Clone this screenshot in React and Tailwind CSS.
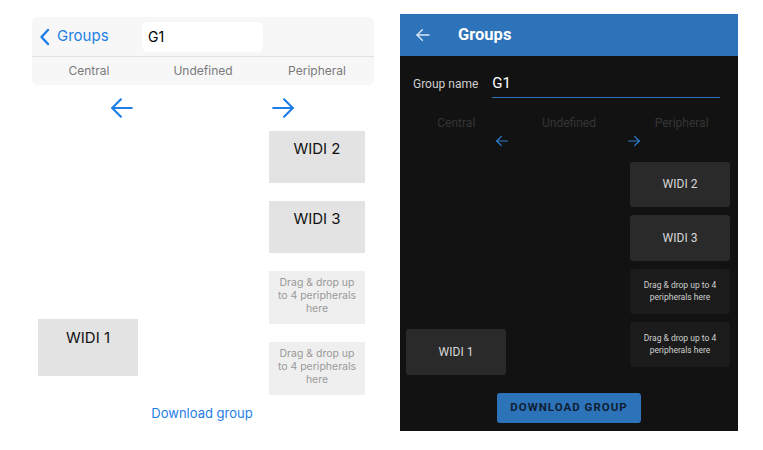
import React from "react";

const Arrow = ({ dir = "left", size = 26, stroke = 2, color = "#1e7ee6" }) => (
  <svg width={size} height={size} viewBox="0 0 24 24" fill="none" stroke={color} strokeWidth={stroke} strokeLinecap="round" strokeLinejoin="round">
    {dir === "left" ? (
      <>
        <path d="M21 12H3" />
        <path d="M11 4l-8 8 8 8" />
      </>
    ) : (
      <>
        <path d="M3 12h18" />
        <path d="M13 4l8 8-8 8" />
      </>
    )}
  </svg>
);

const IosPanel = () => {
  return (
    <div className="w-[342px] ml-[32px] mt-[17px] flex flex-col" style={{ fontFamily: "Inter, 'Noto Sans', sans-serif" }}>
      {/* Nav bar */}
      <div className="bg-[#f7f7f7] rounded-md">
        <div className="h-[40px] flex items-center border-b border-[#e2e2e2]">
          <div className="flex items-center w-[110px] pl-[7px] text-[#1e7ee6]">
            <svg width="12" height="18" viewBox="0 0 12 18" fill="none" stroke="#1e7ee6" strokeWidth="2.4" strokeLinecap="round" strokeLinejoin="round">
              <path d="M9 2L2.5 9L9 16" />
            </svg>
            <span className="ml-[6px] text-[15px]">Groups</span>
          </div>
          <div className="w-[121px] h-[30px] bg-white rounded-md flex items-center px-[6px] text-[14px] text-black">G1</div>
        </div>
        <div className="h-[28px] grid grid-cols-3 items-center text-[12px] text-[#7a7a7a] text-center">
          <span>Central</span>
          <span>Undefined</span>
          <span>Peripheral</span>
        </div>
      </div>

      {/* Move arrows */}
      <div className="h-[46px] flex items-center">
        <div className="ml-[77px]">
          <Arrow dir="left" />
        </div>
        <div className="ml-[135px]">
          <Arrow dir="right" />
        </div>
      </div>

      {/* Columns */}
      <div className="flex">
        <div className="w-[114px] pl-[6px] pt-[188px]">
          <div className="w-[100px] h-[57px] bg-[#e3e3e3] flex justify-center pt-[8px] text-[15px] text-[#111]">WIDI 1</div>
        </div>
        <div className="w-[114px]" />
        <div className="w-[114px] pl-[9px] flex flex-col gap-[18px]">
          <div className="w-[96px] h-[52px] bg-[#e3e3e3] flex justify-center pt-[7px] text-[15px] text-[#111]">WIDI 2</div>
          <div className="w-[96px] h-[52px] bg-[#e3e3e3] flex justify-center pt-[7px] text-[15px] text-[#111]">WIDI 3</div>
          <div className="w-[96px] h-[53px] bg-[#efefef] flex justify-center pt-[5px] text-center text-[10.5px] leading-[13px] text-[#9a9a9a]">
            Drag &amp; drop up
            <br />
            to 4 peripherals
            <br />
            here
          </div>
          <div className="w-[96px] h-[53px] bg-[#efefef] flex justify-center pt-[5px] text-center text-[10.5px] leading-[13px] text-[#9a9a9a]">
            Drag &amp; drop up
            <br />
            to 4 peripherals
            <br />
            here
          </div>
        </div>
      </div>

      <div className="mt-[9px] text-center text-[13px] text-[#1e7ee6] pr-[2px]">Download group</div>
    </div>
  );
};

const AndroidPanel = () => {
  return (
    <div className="w-[338px] h-[417px] ml-[26px] mt-[14px] bg-[#121212] flex flex-col" style={{ fontFamily: "Roboto, 'Noto Sans', sans-serif" }}>
      {/* App bar */}
      <div className="h-[42px] bg-[#2d73b9] flex items-center pl-[15px]">
        <Arrow dir="left" size={16} stroke={2} color="#dce8f5" />
        <span className="ml-[27px] text-[16.5px] font-bold text-white">Groups</span>
      </div>

      {/* Group name */}
      <div className="mt-[16px] flex items-end pl-[13px] pr-[18px]">
        <span className="text-[12px] text-[#cfcfcf] pb-[5px]">Group name</span>
        <div className="ml-[14px] flex-1 border-b border-[#2d73b9] pb-[2px] text-[15px] text-white">G1</div>
      </div>

      {/* Labels */}
      <div className="mt-[16px] grid grid-cols-3 text-center text-[12px] text-[#353535]">
        <span>Central</span>
        <span>Undefined</span>
        <span>Peripheral</span>
      </div>
      <div className="flex h-[18px] items-center">
        <div className="ml-[95px]">
          <Arrow dir="left" size={14} stroke={2} color="#2f7fd3" />
        </div>
        <div className="ml-[118px]">
          <Arrow dir="right" size={14} stroke={2} color="#2f7fd3" />
        </div>
      </div>

      {/* Columns */}
      <div className="mt-[12px] flex">
        <div className="w-[112px] pl-[6px] pt-[167px]">
          <div className="w-[100px] h-[46px] rounded-[3px] bg-[#2a2a2a] flex items-center justify-center text-[12px] text-[#d8d8d8]">WIDI 1</div>
        </div>
        <div className="w-[118px]" />
        <div className="flex flex-col gap-[8px]">
          <div className="w-[100px] h-[45px] rounded-[3px] bg-[#2a2a2a] flex items-center justify-center text-[12px] text-[#d8d8d8]">WIDI 2</div>
          <div className="w-[100px] h-[46px] rounded-[3px] bg-[#2a2a2a] flex items-center justify-center text-[12px] text-[#d8d8d8]">WIDI 3</div>
          <div className="w-[100px] h-[45px] rounded-[3px] bg-[#1b1b1b] flex items-center justify-center text-center text-[8.5px] leading-[12px] text-[#cfcfcf] px-[8px]">
            Drag &amp; drop up to 4 peripherals here
          </div>
          <div className="w-[100px] h-[45px] rounded-[3px] bg-[#1b1b1b] flex items-center justify-center text-center text-[8.5px] leading-[12px] text-[#cfcfcf] px-[8px]">
            Drag &amp; drop up to 4 peripherals here
          </div>
        </div>
      </div>

      <div className="mt-[18px] flex justify-center">
        <div className="w-[144px] h-[30px] rounded-[3px] bg-[#2d73b9] flex items-center justify-center text-[11.5px] font-bold tracking-[1px] text-[#0f1f33]">
          DOWNLOAD GROUP
        </div>
      </div>
    </div>
  );
};

export default function App() {
  return (
    <div className="w-[763px] h-[450px] bg-white flex items-start overflow-hidden">
      <IosPanel />
      <AndroidPanel />
    </div>
  );
}
